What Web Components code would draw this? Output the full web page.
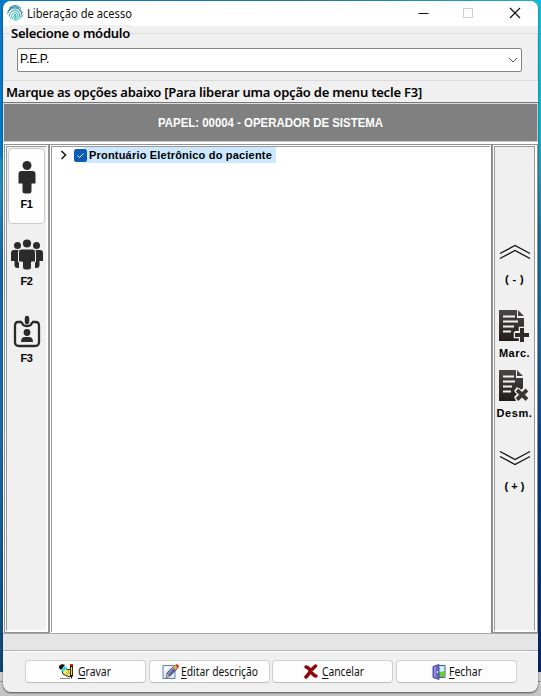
<!DOCTYPE html>
<html lang="pt-BR"><head><meta charset="utf-8"><title>Liberação de acesso</title>
<style>html,body{margin:0;height:100%;overflow:hidden}</style></head><body>
<access-dialog></access-dialog>
<script>
function define(name, html, ready) {
  const t = document.createElement('template');
  t.innerHTML = html;
  customElements.define(name, class extends HTMLElement {
    constructor() { super(); this.attachShadow({mode:'open'}).append(t.content.cloneNode(true)); }
    connectedCallback() { if (ready) ready(this, this.shadowRoot); }
  });
}

/* One line of text that spans a given width, by tracking or (squeeze) by horizontal scale. */
define('fit-text', `<style>:host{display:inline-block;white-space:nowrap;text-align:left}span{display:inline-block;transform-origin:0 50%}</style><span><slot></slot></span>`, (el, root) => {
  const s = root.querySelector('span'), w = +el.getAttribute('w');
  const n = el.textContent.length;
  const natural = s.getBoundingClientRect().width;
  if (natural && el.hasAttribute('squeeze')) s.style.transform = `scaleX(${w / natural})`;
  else if (natural) s.style.letterSpacing = ((w - natural) / n) + 'px';
  el.style.width = w + 'px';
});

const icons = {
finger:`<svg width="18" height="18" viewBox="0 0 18 18" fill="none" stroke="#137f9b" stroke-width="1"><path d="M3 4.500Q9 -1.500 15 4.500M1.500 7.500Q9 -2.500 16.500 8.500" /><path d="M1.500 10Q3.500 4 9 4t7 7v2M3 12.500Q5 6 9 6t5 6v2.500" stroke="#2190a4"/><path d="M4.500 14.500Q7 8 9 8t3 4v4M6 15.500Q9 11 9 10t1 2v5M8 16.500Q9 14.500 9.500 12" stroke="#21b5b7"/></svg>`,
person:`<svg width="18" height="33" viewBox="0 0 18 33" fill="#2b2b2b"><circle cx="9" cy="4.500" r="4.500"/><path d="M3.500 10h11q3 0 3 3v9.500h-4V30q0 2.500-2.300 2.500H7Q4.500 32.500 4.500 30v-7.500h-4V13q0-3 3-3z"/></svg>`,
group:`<svg width="34" height="31" viewBox="0 0 34 31" fill="#2b2b2b"><circle cx="7.500" cy="6.500" r="3.500"/><circle cx="26.500" cy="6.500" r="3.500"/><path d="M4 11h5v18H7.500q-3 0-3-3v-4H1v-8q0-3 3-3zM30 11h-5v18h1.500q3 0 3-3v-4H33v-8q0-3-3-3z"/><circle cx="17" cy="4.500" r="5" fill="#f0f0f0"/><circle cx="17" cy="4.500" r="4.100"/><path d="M11.500 10h11q3 0 3 3v10h-4v5q0 3-2.500 3h-4q-2.500 0-2.500-3v-5h-4V13q0-3 3-3z" stroke="#f0f0f0" stroke-width="1"/></svg>`,
badge:`<svg width="28" height="33" viewBox="0 0 28 33" fill="none" stroke="#2b2b2b" stroke-width="2.300"><path d="M9 7H5Q2 7 2 11v16q0 4 4 4h16q4 0 4-4V11q0-4-3-4h-4M9 7q0 4 5 4t5-4"/><path d="M14 3v4" stroke-width="4.500" stroke-linecap="round"/><circle cx="14" cy="17.500" r="3.400" fill="#2b2b2b" stroke="none"/><path d="M8 27q0-5 4-5h4q4 0 4 5z" fill="#2b2b2b" stroke="none"/></svg>`,
up:`<svg width="32" height="16" viewBox="0 0 32 16" fill="none" stroke="#111" stroke-width="1.300"><path d="M1 9.500 16 1.500l15 8M1 14.500 16 6.500l15 8"/></svg>`,
down:`<svg width="32" height="16" viewBox="0 0 32 16" fill="none" stroke="#111" stroke-width="1.300"><path d="M1 1.500 16 9.500l15-8M1 6.500 16 14.500l15-8"/></svg>`,
mark:`<svg width="32" height="33" viewBox="0 0 32 33"><defs><linearGradient id="g" x2="0" y2="1"><stop stop-color="#4b4747"/><stop offset="1" stop-color="#241c1c"/></linearGradient></defs><path d="M0 1h18v8h7v9h-5v4h-4v7h4v3H0zM19 1l6 6h-6z" fill="url(#g)"/><path d="M4 7.500h12M4 12.500h15M4 17.500h11M4 22.500h8" stroke="#f3f3f3" stroke-width="1.800"/><path d="M21 19h4v5h5v4h-5v5h-4v-5h-5v-4h5z" fill="#302a2b" stroke="#f0f0f0" stroke-width="2.500" paint-order="stroke"/></svg>`,
unmark:`<svg width="32" height="33" viewBox="0 0 32 33"><defs><linearGradient id="g" x2="0" y2="1"><stop stop-color="#4b4747"/><stop offset="1" stop-color="#241c1c"/></linearGradient></defs><path d="M0 1h17v8h7v10l-2 2-4-3-3 4 3 3-3 3 2 4H0zM18 1l6 6h-6z" fill="url(#g)"/><path d="M4 7.500h11M4 12.500h12M4 17.500h9M4 22.500h8" stroke="#f3f3f3" stroke-width="1.800"/><path d="m18 21 10 9.500m0-9.500-10 9.500" stroke="#f0f0f0" stroke-width="6"/><path d="m18 21 10 9.500m0-9.500-10 9.500" stroke="#3b3535" stroke-width="3.800"/></svg>`,
save:`<svg width="16" height="16" viewBox="0 0 16 16"><path d="M1 14.500h10" stroke="#888"/><path d="m3 7 3-3 3 2 3-1 1 6-2 2-3-1-4-2z" fill="#f5ed65" stroke="#111" stroke-width=".9"/><path d="m2 6 4-4 2 2-4 4z" fill="#20dce5"/><path d="m0 2 3-2 3 1-4 5-2-2z" fill="#111"/><path d="M12.500 1v11" stroke="#111" stroke-width="3"/><path d="M12.500 3v9" stroke="#f4df20" stroke-width="1.300"/><path d="M11 1h3" stroke="#e01717" stroke-width="2"/><path d="m11 11 3 0-1.500 4z" fill="#111"/><path d="m7 8 3 3m-1-4 2 3" stroke="#897a20" stroke-width=".7"/></svg>`,
edit:`<svg width="17" height="16" viewBox="0 0 17 16"><path d="M1 1.500h12v13H1z" fill="#d8ecff" stroke="#6181ad"/><path d="M2 2h6l-6 7z" fill="#fff"/><path d="m4 14 1-5 7-7 3 3-7 7z" fill="#65659e" stroke="#363b68" stroke-width=".7"/><path d="m5 11 6-7" stroke="#b9badc"/><path d="m4 14 1-4 2.500 2z" fill="#e2a85c"/><path d="m11 3 2 3 2-2-2-3z" fill="#eeb330"/><path d="m13 1 2-1 2 2-1 3z" fill="#d73025"/></svg>`,
cancel:`<svg width="14" height="15" viewBox="0 0 14 15"><path d="M2 3q2 0 5 4.500T12 12M11.500 2Q8 5 6 8t-4 5" fill="none" stroke="#8e0508" stroke-width="3.500" stroke-linecap="round"/></svg>`,
close:`<svg width="14" height="16" viewBox="0 0 14 16"><path d="M6 1.500h7v12H6z" fill="#c9f2fd" stroke="#52529a"/><path d="M7 8q3 0 5.500-1v6H7z" fill="#62cf21"/><path d="m1 2.500 6-2v15l-6-2z" fill="#6666cc" stroke="#4e4e9c"/><path d="m2 3 2-.7v11L2 13z" fill="#8c8ce2"/><path d="M5.500 7v2" stroke="#fff"/></svg>`
};
define('ui-icon','<style>:host{display:block;line-height:0}svg{display:block}</style>',(el,root)=>{root.innerHTML+=icons[el.getAttribute('name')]||'';});

define('title-bar', `<style>
:host{display:flex;height:25px;background:#fff;align-items:center;font:12px "Noto Sans","Open Sans",sans-serif;color:#111;box-sizing:border-box;padding:0 17px 0 3px}
ui-icon{margin:-1px 3px 0 0}.gap{flex:1}svg.m{margin-right:34px}svg.s{margin-right:35px}svg{display:block;margin-top:-1px}</style>
<ui-icon name="finger"></ui-icon><fit-text squeeze w="105">Liberação de acesso</fit-text><span class="gap"></span>
<svg class="m" width="11" height="12"><path d="M.5 6.500h10" stroke="#111"/></svg>
<svg class="s" width="11" height="12"><path d="M.5 1.500h9v9h-9z" fill="none" stroke="#ccc"/></svg>
<svg width="12" height="12"><path d="m1 1 10 10M11 1 1 11" stroke="#111" stroke-width="1.200"/></svg>`);

define('module-select', `<style>
:host{display:block;height:55px;padding-top:7px;box-sizing:border-box}
.box{box-sizing:border-box;height:48px;border:1px solid #dcdcdc;padding:14px 15px 0 13px;position:relative}
.legend{position:absolute;left:6px;top:-9px;background:#f0f0f0;padding:0 1px;font:600 13px/16px "Noto Sans","Open Sans",sans-serif;color:#000}
.combo{height:24px;box-sizing:border-box;border:1px solid #858585;border-radius:2px;background:#fff;display:flex;align-items:center;padding:0 3px 0 2px;justify-content:space-between;font:12px/20px "Liberation Sans",sans-serif;color:#000}
fit-text.v{margin-top:-2px}</style>
<div class="box"><div class="legend"><fit-text w="119">Selecione o módulo</fit-text></div>
<div class="combo"><fit-text class="v" w="29">P.E.P.</fit-text><svg width="10" height="6"><path d="m1 1 4 4 4-4" fill="none" stroke="#555"/></svg></div></div>`);

define('side-panel', `<style>
:host{display:block;box-sizing:border-box;background:#f0f0f0;border:1px solid #929292;height:489px}
.in{box-sizing:border-box;height:100%;border:1px solid #fff}.in2{box-sizing:border-box;height:100%;border:1px solid #999;border-right-color:#fff;border-bottom-color:#fff}
:host([right]) .in{border-right-width:2px}:host([right]) .in2{border:1px solid #999;border-bottom-color:#fff}
</style><div class="in"><div class="in2"><slot></slot></div></div>`);

define('tool-button', `<style>
:host{display:flex;flex-direction:column;align-items:center;box-sizing:border-box;font:bold 11px/13px "Liberation Sans",sans-serif;color:#000}
:host([active]){background:#fdfdfd;border:1px solid #ccc;border-radius:4px}
ui-icon{margin-bottom:var(--gap,4px)}</style><ui-icon></ui-icon><fit-text></fit-text>`,(el,root)=>{
 const i=root.querySelector('ui-icon');i.shadowRoot.innerHTML='<style>:host{display:block}svg{display:block}</style>'+icons[el.getAttribute('icon')];
 const f=document.createElement('fit-text');f.setAttribute('w',el.getAttribute('w'));f.textContent=el.getAttribute('label');root.querySelector('fit-text').replaceWith(f);
});

define('tree-view', `<style>
:host{display:block;box-sizing:border-box;background:#fff;border:1px solid #929292;border-right-color:#858590;border-bottom:0;height:489px}
.in{height:100%;box-sizing:border-box;border:1px solid #fff}.in2{height:100%;box-sizing:border-box;border:1px solid #999;border-width:1px 0 0 1px;padding:0 0 0 7px}
.row{display:flex;align-items:center;height:16px}
.tick{margin-left:6px;position:relative;z-index:1}.sel{background:#cce8ff;height:16px;border-radius:0 2px 2px 0;margin-left:-3px;padding:0 4px 0 5px;font:bold 11px/16px "Liberation Sans",sans-serif;color:#000}svg{display:block}</style>
<div class="in"><div class="in2"><div class="row"><svg width="9" height="10"><path d="m2.500 1 4 4-4 4" fill="none" stroke="#222" stroke-width="1.700"/></svg>
<svg class="tick" width="13" height="13"><rect width="13" height="13" rx="2.500" fill="#0a5cb8"/><path d="m3.500 6.500 2 2 4-4" fill="none" stroke="#fff"/></svg><div class="sel"><fit-text w="183">Prontuário Eletrônico do paciente</fit-text></div></div></div></div>`);

define('action-button', `<style>
:host{display:flex;align-items:center;box-sizing:border-box;width:121px;height:23px;background:#fdfdfd;border:1px solid #d0d0d0;border-bottom-color:#bdbdbd;border-radius:4px;font:12px/16px "Noto Sans","Open Sans",sans-serif;color:#111}
ui-icon{margin-right:var(--gap,3px)}u{text-decoration:underline;text-underline-offset:2px;text-decoration-thickness:1px;text-decoration-skip-ink:none}</style>`,(el,root)=>{
 const l=el.getAttribute('label');
 root.innerHTML+=`<ui-icon name="${el.getAttribute('icon')}"></ui-icon><fit-text squeeze w="${el.getAttribute('w')}"><u>${l[0]}</u>${l.slice(1)}</fit-text>`;
});

define('access-dialog', `<style>
:host{display:block;width:541px;height:696px;box-sizing:border-box;padding:1px 3px 3px;
background:linear-gradient(#888,#888) 0 681px/541px 1px no-repeat,
linear-gradient(#d0d0d0,#c4c4c4) 0 672px/541px 24px no-repeat,
linear-gradient(90deg,#0879c7,#247d9e 60%,#16bbd3) 0 0/541px 2px no-repeat,
linear-gradient(#0778c9 0,#0878c5 155px,#1a91b9 163px,#2b8abb 190px,#1767a9 260px,#1c69a9 430px,#13548b 600px,#0e4770) 0 0/10px 672px no-repeat,
linear-gradient(#18bdd5 0,#12b2cf 120px,#2a95ae 175px,#197499 230px,#176a9e 330px,#09408a 450px,#052764 672px) 531px 0/10px 672px no-repeat #c4c4c4}
.win{width:535px;height:691px;background:#f0f0f0;border-radius:8px;overflow:hidden;display:flex;flex-direction:column;box-shadow:0 1px 2px #0009}
.caption{height:21px;padding:3px 0 0 3px;box-sizing:border-box;font:600 13px/16px "Noto Sans","Open Sans",sans-serif;color:#000}
.head{height:41px;box-sizing:border-box;border-top:1px solid #777;border-bottom:1px solid #fff;background:#808080;display:flex;align-items:center;justify-content:center;font:bold 12px/16px "Liberation Sans",sans-serif;color:#fff;box-shadow:inset 1px 1px #ddd,inset -1px -1px #c9c9c9}
.main{display:grid;grid-template-columns:45px 443px 46px;padding:1px 0 0 1px;background:#fff;height:489px;box-sizing:content-box}
.left{display:flex;flex-direction:column;align-items:center;padding-top:0}
.left tool-button{width:37px;height:76px;padding-top:13px}
.left tool-button[active]{margin-top:1px;padding-top:12px}
.right{display:flex;flex-direction:column;align-items:center;padding-top:97px}
.status{height:18px;background:#e5e5e5;border-top:1px solid #aaa;border-bottom:1px solid #b0b0b0;box-sizing:border-box}
.foot{display:flex;gap:2.670px;padding:8px 0 0 22px;border-top:1px solid #fff}
</style>
<div class="win"><title-bar></title-bar><module-select></module-select>
<div class="caption"><fit-text w="416">Marque as opções abaixo [Para liberar uma opção de menu tecle F3]</fit-text></div>
<div class="head"><fit-text squeeze w="225">PAPEL: 00004 - OPERADOR DE SISTEMA</fit-text></div>
<div class="main">
<side-panel><div class="left"><tool-button active icon="person" label="F1" w="12"></tool-button>
<tool-button icon="group" label="F2" w="12" style="height:77px;padding-top:15px;--gap:5px"></tool-button><tool-button icon="badge" label="F3" w="12" style="padding-top:14px"></tool-button></div></side-panel>
<tree-view></tree-view>
<side-panel right><div class="right">
<tool-button icon="up" label="( - )" w="19" style="--gap:13px"></tool-button>
<tool-button icon="mark" label="Marc." w="31" style="margin-top:23px;--gap:5px"></tool-button>
<tool-button icon="unmark" label="Desm." w="36" style="margin-top:9px;--gap:5px"></tool-button>
<tool-button icon="down" label="( + )" w="20" style="margin-top:30px;--gap:14px"></tool-button>
</div></side-panel></div>
<div class="status"></div>
<div class="foot">
<action-button icon="save" label="Gravar" w="33" style="padding-left:33px"></action-button>
<action-button icon="edit" label="Editar descrição" w="77" style="padding-left:12px;--gap:2px"></action-button>
<action-button icon="cancel" label="Cancelar" w="42" style="padding-left:31px;--gap:4px"></action-button>
<action-button icon="close" label="Fechar" w="33" style="padding-left:35px"></action-button>
</div></div>`);
</script></body></html>
